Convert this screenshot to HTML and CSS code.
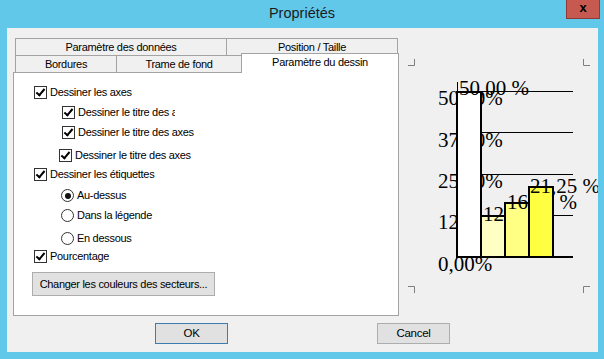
FILE: index.html
```html
<!DOCTYPE html>
<html lang="fr">
<head>
    <meta charset="UTF-8">
    <title>Propriétés</title>
    <link rel="stylesheet" href="styles.css">
</head>
<body>
    <div class="titlebar">
        <span class="title">Propriétés</span>
        <div class="close">x</div>
    </div>
    <div class="client">
        <div class="main">
            <div class="tabs">
                <div class="tab-row">
                    <div class="tab w-data">Paramètre des données</div>
                    <div class="tab w-pos">Position / Taille</div>
                </div>
                <div class="tab-row row2">
                    <div class="tab w-border">Bordures</div>
                    <div class="tab w-fill">Trame de fond</div>
                    <div class="tab w-draw active">Paramètre du dessin</div>
                </div>
                <div class="panel">
                    <div class="opt">
                        <span class="check on"></span><span>Dessiner les axes</span>
                    </div>
                    <div class="opt sub">
                        <span class="check on"></span><span class="clip">Dessiner le titre des axes</span>
                    </div>
                    <div class="opt sub tall">
                        <span class="check on"></span><span>Dessiner le titre des axes</span>
                    </div>
                    <div class="opt sub shifted short">
                        <span class="check on"></span><span>Dessiner le titre des axes</span>
                    </div>
                    <div class="opt mid">
                        <span class="check on"></span><span>Dessiner les étiquettes</span>
                    </div>
                    <div class="opt radio-row">
                        <span class="radio on"></span><span>Au-dessus</span>
                    </div>
                    <div class="opt radio-row tall">
                        <span class="radio"></span><span>Dans la légende</span>
                    </div>
                    <div class="opt radio-row tiny">
                        <span class="radio"></span><span>En dessous</span>
                    </div>
                    <div class="opt wide">
                        <span class="check on"></span><span>Pourcentage</span>
                    </div>
                    <div class="sector-btn">Changer les couleurs des secteurs...</div>
                </div>
            </div>
            <svg class="chart" width="199" height="278" viewBox="0 0 199 278">
                <!-- resize corners -->
                <g stroke="#7f7f7f" stroke-width="1" fill="none">
                    <path d="M9 27.5 H15.5 V21"/>
                    <path d="M184.5 21 V27.5 H191"/>
                    <path d="M9 248.5 H15.5 V255"/>
                    <path d="M191 248.5 H184.5 V255"/>
                </g>
                <!-- axis labels -->
                <text x="39" y="67">50,00%</text>
                <text x="39" y="108.5">37,50%</text>
                <text x="39" y="150">25,00%</text>
                <text x="39" y="191">12,50%</text>
                <text x="39" y="233">0,00%</text>
                <!-- grid -->
                <g stroke="#000" stroke-width="1">
                    <line x1="58" y1="53.5" x2="174" y2="53.5"/>
                    <line x1="58" y1="94.5" x2="174" y2="94.5"/>
                    <line x1="58" y1="136.5" x2="174" y2="136.5"/>
                    <line x1="58" y1="177.5" x2="174" y2="177.5"/>
                    <line x1="58.5" y1="44" x2="58.5" y2="219"/>
                </g>
                <line x1="58" y1="219" x2="174" y2="219" stroke="#000" stroke-width="2"/>
                <!-- bars -->
                <rect x="58" y="54" width="24" height="165" fill="#fff" stroke="#000" stroke-width="2"/>
                <text x="60" y="57">50,00 %</text>
                <rect x="82" y="178" width="24" height="41" fill="#ffffc4" stroke="#000" stroke-width="2"/>
                <text x="84" y="183">12,50 %</text>
                <rect x="106" y="165" width="24" height="54" fill="#ffff84" stroke="#000" stroke-width="2"/>
                <text x="108" y="171">16,25 %</text>
                <rect x="130" y="149" width="24" height="70" fill="#ffff42" stroke="#000" stroke-width="2"/>
                <text x="131" y="155">21,25 %</text>
            </svg>
        </div>
        <div class="actions">
            <div class="btn default">OK</div>
            <div class="btn">Cancel</div>
        </div>
    </div>
</body>
</html>
```

FILE: styles.css
```css
body {
    margin: 0;
    width: 604px;
    height: 359px;
    overflow: hidden;
    background: #61c8ea;
    font-family: "Liberation Sans", Arial, sans-serif;
    font-size: 11px;
    letter-spacing: -0.3px;
    color: #000;
}

/* title bar */
.titlebar {
    height: 28px;
    display: grid;
    grid-template-columns: 1fr auto 1fr;
    align-items: start;
}

.title {
    grid-column: 2;
    font-size: 14.5px;
    letter-spacing: 0;
    line-height: 26px;
    color: #1c1c1c;
}

.close {
    grid-column: 3;
    justify-self: end;
    margin-right: 4px;
    width: 34px;
    height: 19px;
    box-sizing: border-box;
    background: #c75a50;
    border: 1px solid #8c3b35;
    border-top: none;
    text-align: center;
    font-weight: bold;
    font-size: 13px;
    line-height: 15px;
    letter-spacing: 0;
}

/* client area */
.client {
    margin: 0 6px 7px 7px;
    height: 324px;
    background: #f0f0f0;
}

.main {
    display: flex;
    padding: 10px 0 0 6px;
}

.tabs {
    width: 386px;
}

.tab-row {
    display: flex;
    margin-left: 2px;
    height: 18px;
}

.row2 {
    margin-top: -1px;
    align-items: flex-end;
}

.tab {
    box-sizing: border-box;
    height: 18px;
    border: 1px solid #a3a3a3;
    background: #f0f0f0;
    text-align: center;
    line-height: 16px;
}

.tab + .tab {
    margin-left: -1px;
}

.w-data { width: 212px; }
.w-pos { width: 172px; }
.w-border { width: 102px; }
.w-fill { width: 126px; }
.w-draw { width: 158px; }

.tab.active {
    height: 20px;
    background: #fff;
    border-bottom: none;
    line-height: 17px;
    position: relative;
    z-index: 1;
}

.panel {
    margin-top: -1px;
    height: 244px;
    box-sizing: border-box;
    border: 1px solid #a3a3a3;
    background: #fff;
    padding: 13px 0 0 20px;
}

/* options */
.opt {
    display: flex;
    align-items: flex-start;
    gap: 3px;
    height: 20px;
    line-height: 13px;
    white-space: nowrap;
}

.opt.tall { height: 23px; }
.opt.short { height: 19px; }
.opt.mid { height: 21px; }
.opt.tiny { height: 18px; }
.opt.wide { height: 22px; }

.sub { margin-left: 28px; }
.sub.shifted { margin-left: 25px; }
.radio-row { margin-left: 27px; }

.clip {
    display: inline-block;
    width: 97px;
    overflow: hidden;
}

.check {
    width: 13px;
    height: 13px;
    box-sizing: border-box;
    border: 1px solid #333;
    background: #fff;
    flex: none;
    position: relative;
}

.check.on::after {
    content: "";
    position: absolute;
    left: 3px;
    top: 0px;
    width: 3px;
    height: 7px;
    border: solid #000;
    border-width: 0 2px 2px 0;
    transform: rotate(40deg);
}

.radio {
    width: 13px;
    height: 13px;
    box-sizing: border-box;
    border: 1px solid #333;
    border-radius: 50%;
    background: #fff;
    flex: none;
    position: relative;
}

.radio.on::after {
    content: "";
    position: absolute;
    left: 2.5px;
    top: 2.5px;
    width: 6px;
    height: 6px;
    border-radius: 50%;
    background: #111;
}

.sector-btn {
    margin-left: -2px;
    width: 183px;
    height: 24px;
    box-sizing: border-box;
    border: 1px solid #adadad;
    background: #e1e1e1;
    text-align: center;
    line-height: 22px;
}

/* chart preview */
.chart {
    flex: none;
    font-family: "Liberation Serif", "Times New Roman", serif;
    font-size: 21px;
    letter-spacing: 0;
}

/* bottom buttons */
.actions {
    display: flex;
    gap: 149px;
    padding-left: 148px;
    margin-top: 7px;
}

.btn {
    width: 73px;
    height: 21px;
    box-sizing: border-box;
    border: 1px solid #adadad;
    background: #e1e1e1;
    text-align: center;
    line-height: 19px;
    font-size: 11.5px;
}

.btn.default {
    border-color: #3f7cae;
}
```
